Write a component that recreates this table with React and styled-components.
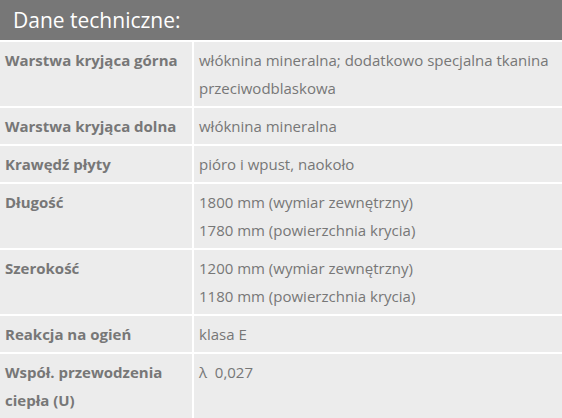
import React from "react";
import styled, { createGlobalStyle } from "styled-components";

const GlobalStyle = createGlobalStyle`
  html, body {
    margin: 0;
    padding: 0;
    background: #ffffff;
  }
  body {
    font-family: "Open Sans", "Noto Sans", sans-serif;
  }
`;

const SPECS = [
  {
    label: "Warstwa kryjąca górna",
    values: ["włóknina mineralna; dodatkowo specjalna tkanina przeciwodblaskowa"],
  },
  { label: "Warstwa kryjąca dolna", values: ["włóknina mineralna"] },
  { label: "Krawędź płyty", values: ["pióro i wpust, naokoło"] },
  {
    label: "Długość",
    values: ["1800 mm (wymiar zewnętrzny)", "1780 mm (powierzchnia krycia)"],
  },
  {
    label: "Szerokość",
    values: ["1200 mm (wymiar zewnętrzny)", "1180 mm (powierzchnia krycia)"],
  },
  { label: "Reakcja na ogień", values: ["klasa E"] },
  { label: "Współ. przewodzenia ciepła (U)", values: ["λ\u00a0 0,027"] },
];

// spec table
const App = () => {
  return (
    <>
      <GlobalStyle />
      <Wrapper>
        <Title>Dane techniczne:</Title>
        <Table>
          {SPECS.map((row) => (
            <React.Fragment key={row.label}>
              <Cell $label>{row.label}</Cell>
              <Cell>
                {row.values.map((v) => (
                  <div key={v}>{v}</div>
                ))}
              </Cell>
            </React.Fragment>
          ))}
        </Table>
      </Wrapper>
    </>
  );
};

const Wrapper = styled.div`
  width: 562px;
  height: 418px;
  overflow: hidden;
  background: #ffffff;
`;

const Title = styled.h2`
  margin: 0;
  height: 40px;
  line-height: 40px;
  padding-left: 13px;
  background: #777777;
  color: #ffffff;
  font-size: 21px;
  font-weight: 400;
`;

const Table = styled.div`
  display: grid;
  grid-template-columns: 192px 1fr;
  gap: 2px;
  padding-top: 2px;
  background: #ffffff;
`;

const Cell = styled.div`
  background: #ececec;
  padding: 4px 5px;
  font-size: 15px;
  line-height: 28px;
  color: #777777;
  font-weight: ${(p) => (p.$label ? 700 : 400)};
`;

export default App;
